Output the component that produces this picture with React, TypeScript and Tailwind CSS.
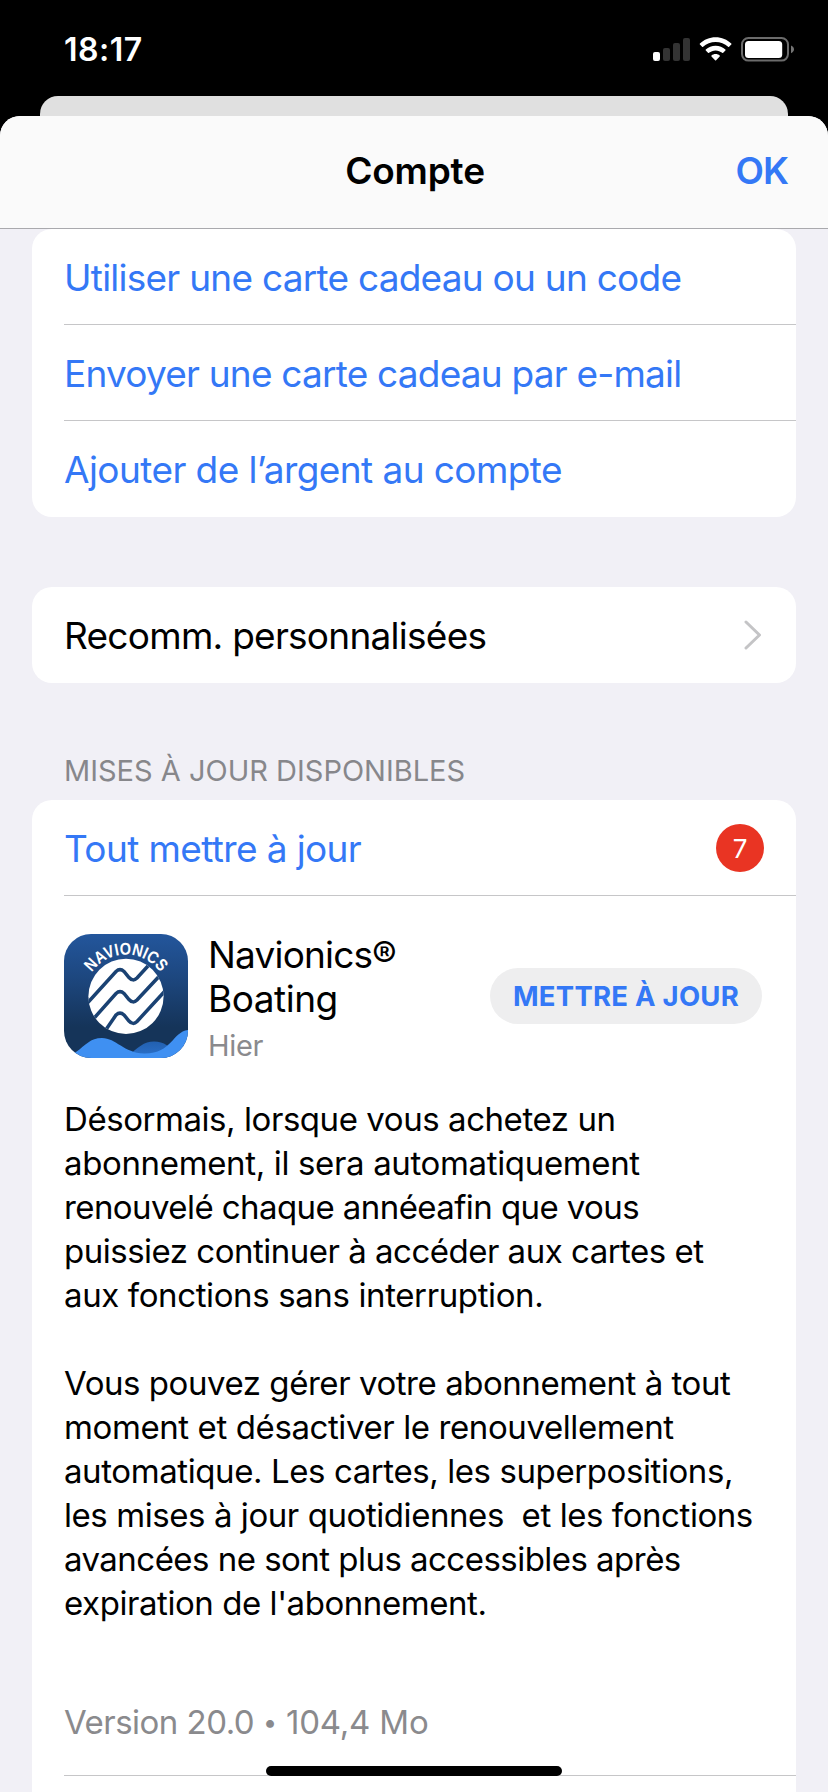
import React from "react";

const sf = "font-[Inter,'Noto_Sans',sans-serif]";

const description: { text: string; cls: string }[] = [
  { text: "Désormais, lorsque vous achetez un", cls: "tracking-[-0.44px]" },
  { text: "abonnement, il sera automatiquement", cls: "tracking-[-0.35px]" },
  { text: "renouvelé chaque annéeafin que vous", cls: "tracking-[-0.58px]" },
  { text: "puissiez continuer à accéder aux cartes et", cls: "tracking-[-0.50px]" },
  { text: "aux fonctions sans interruption.", cls: "tracking-[-0.38px]" },
  { text: "", cls: "" },
  { text: "Vous pouvez gérer votre abonnement à tout", cls: "tracking-[-0.45px]" },
  { text: "moment et désactiver le renouvellement", cls: "tracking-[-0.40px]" },
  { text: "automatique. Les cartes, les superpositions,", cls: "tracking-[-0.41px]" },
  { text: "les mises à jour quotidiennes  et les fonctions", cls: "tracking-[-0.43px]" },
  { text: "avancées ne sont plus accessibles après", cls: "tracking-[-0.53px]" },
  { text: "expiration de l'abonnement.", cls: "tracking-[-0.44px]" },
];

function StatusIcons() {
  return (
    <svg width="144" height="30" viewBox="0 0 144 30" fill="none">
      <rect x="1" y="16" width="7" height="9" rx="2" fill="#fff" />
      <rect x="11" y="12" width="7" height="13" rx="2" fill="#333" />
      <rect x="21" y="7" width="7" height="18" rx="2" fill="#333" />
      <rect x="31" y="2" width="7" height="23" rx="2" fill="#333" />
      <g transform="translate(47.6 1.2)" fill="#fff">
        <path d="M16 0C9.900 0 4.400 2.400 .3 6.300C0 6.600 0 7 .3 7.300L2.500 9.500C2.800 9.800 3.200 9.800 3.500 9.500C6.800 6.500 11.200 4.800 16 4.800C20.800 4.800 25.200 6.500 28.500 9.500C28.800 9.800 29.200 9.800 29.500 9.500L31.700 7.300C32 7 32 6.600 31.700 6.300C27.600 2.400 22.100 0 16 0Z" />
        <path d="M16 8.600C12.200 8.600 8.800 10 6.200 12.400C5.900 12.700 5.900 13.100 6.200 13.400L8.400 15.600C8.700 15.900 9.100 15.900 9.400 15.600C11.200 14.100 13.500 13.200 16 13.200C18.500 13.200 20.800 14.100 22.600 15.600C22.900 15.900 23.300 15.900 23.600 15.600L25.800 13.400C26.100 13.100 26.100 12.700 25.800 12.400C23.200 10 19.800 8.600 16 8.600Z" />
        <path d="M16 16.900C14.400 16.900 13 17.400 11.900 18.400C11.600 18.700 11.600 19 11.900 19.300L15.500 23C15.800 23.300 16.200 23.300 16.500 23L20.100 19.300C20.400 19 20.400 18.700 20.100 18.400C19 17.400 17.600 16.900 16 16.900Z" />
      </g>
      <rect x="90" y="2" width="46" height="22.6" rx="6.500" stroke="#6b6b6b" strokeWidth="2" />
      <rect x="93" y="5" width="37.200" height="17" rx="3.500" fill="#fff" />
      <path d="M139 9.500C140.800 10.200 142 11.700 142 13.300C142 15 140.800 16.500 139 17.200Z" fill="#747474" />
    </svg>
  );
}

function NavionicsIcon() {
  return (
    <svg width="124" height="124" viewBox="0 0 124 124" className="shrink-0">
      <defs>
        <linearGradient id="sea" x1="0" y1="0" x2="0" y2="1">
          <stop offset="0" stopColor="#23569c" />
          <stop offset="0.35" stopColor="#1d477f" />
          <stop offset="0.75" stopColor="#153459" />
          <stop offset="1" stopColor="#153459" />
        </linearGradient>
        <linearGradient id="backWave" x1="0" y1="0" x2="0" y2="1">
          <stop offset="0" stopColor="#2260b0" />
          <stop offset="1" stopColor="#2c72cc" />
        </linearGradient>
        <clipPath id="tile">
          <rect width="124" height="124" rx="27" />
        </clipPath>
        <clipPath id="disc">
          <circle cx="62" cy="62.300" r="37.600" />
        </clipPath>
        <path id="arc" d="M20.300 62.300A41.700 41.700 0 0 1 103.700 62.300" />
      </defs>
      <g clipPath="url(#tile)">
        <rect width="124" height="124" fill="url(#sea)" />
        <path d="M62 124C74 113 80 107.500 90 107.500C100 107.500 106 112 114 124Z" fill="url(#backWave)" />
        <path d="M0 124L12 118C22 111 26 104 38 104C52 104 60 119 80 119.500C108 120 108 98 124 96V124Z" fill="#3f90f2" />
        <circle cx="62" cy="62.300" r="37.600" fill="#fff" />
        <g clipPath="url(#disc)" stroke="#1a4273" strokeWidth="3.500" fill="none">
          <path d="M22 70.500L52 37.500Q56 33.700 60 37.500L65 43.500Q69 48 73 44L89 26.500" />
          <path d="M28 86.500L52 59.500Q56 55.700 60 59.500L65 65.500Q69 70 73 66L101 36" />
          <path d="M40 98.500L52 81Q56 77.200 60 81L65 87Q69 91.500 73 87.500L101 57" />
        </g>
      </g>
      <text fill="#fff" className="font-['Liberation_Sans',Arial,sans-serif] text-[17px] font-bold" textAnchor="middle" textLength="80" lengthAdjust="spacingAndGlyphs">
        <textPath href="#arc" startOffset="50%" textLength="80" lengthAdjust="spacingAndGlyphs">
          NAVIONICS
        </textPath>
      </text>
    </svg>
  );
}

function LinkRow({ text, cls, last = false }: { text: string; cls: string; last?: boolean }) {
  return (
    <div className={"ml-8 flex h-24 items-center pt-[2px] whitespace-nowrap text-[37px] text-[#3478f6] " + (last ? "" : "border-b border-[#c6c6c8]")}>
      <span className={cls}>{text}</span>
    </div>
  );
}

export default function App() {
  return (
    <div className={"relative flex h-[1792px] w-[828px] flex-col overflow-hidden bg-black " + sf}>
      <div className="flex h-24 shrink-0 items-start justify-between pt-[30px] pl-16">
        <span className="text-[32px] leading-10 font-semibold tracking-[0.48px] text-white">18:17</span>
        <div className="mt-[6px] mr-[32px]">
          <StatusIcons />
        </div>
      </div>
      <div className="mx-10 h-5 shrink-0 rounded-t-[18px] bg-[#e0e0e0]" />
      <div className="flex min-h-0 grow flex-col overflow-hidden rounded-t-[20px] bg-[#f1f0f6]">
        <header className="grid h-[113px] shrink-0 grid-cols-3 items-center border-b border-[#a9a9ad] bg-[#fafafa] pb-[3px] text-[37px] font-semibold">
          <span />
          <h1 className="pl-[2px] text-center tracking-[-0.18px]">Compte</h1>
          <span className="pr-[40px] text-right font-[560] tracking-[-1px] text-[#3478f6]">OK</span>
        </header>

        <main className="flex flex-col px-8">
          <section className="rounded-[20px] bg-white">
            <LinkRow text="Utiliser une carte cadeau ou un code" cls="tracking-[-0.75px]" />
            <LinkRow text="Envoyer une carte cadeau par e-mail" cls="tracking-[-0.79px]" />
            <LinkRow text="Ajouter de l’argent au compte" cls="tracking-[-0.58px]" last />
          </section>

          <section className="mt-[70px] flex h-24 items-center justify-between rounded-[20px] bg-white pr-[34px] pl-8 text-[37px]">
            <span className="pt-[2px] tracking-[-0.74px]">Recomm. personnalisées</span>
            <svg width="18" height="30" viewBox="0 0 18 30" fill="none" stroke="#c4c4c6" strokeWidth="3" strokeLinecap="round" strokeLinejoin="round">
              <path d="M2 2L15.500 15L2 28" />
            </svg>
          </section>

          <h2 className="mt-[68px] mb-[9px] pl-8 text-[29px] leading-10 text-[#87878b]">MISES À JOUR DISPONIBLES</h2>

          <section className="flex h-[1000px] flex-col rounded-t-[20px] bg-white pl-8">
            <div className="flex h-24 shrink-0 items-center justify-between border-b border-[#c6c6c8] pr-8 text-[37px] text-[#3478f6]">
              <span className="pt-[2px] tracking-[-0.62px]">Tout mettre à jour</span>
              <span className="flex size-12 items-center justify-center rounded-full bg-[#e93423] pt-[2px] text-[26px] font-normal text-white">7</span>
            </div>

            <div className="mt-[37px] flex h-[126px] items-center pr-[34px]">
              <NavionicsIcon />
              <div className="ml-[20px] flex-1 pt-[5px]">
                <div className="text-[37px] leading-[44px]">
                  <div className="tracking-[-0.80px]">Navionics®</div>
                  <div className="tracking-[-0.48px]">Boating</div>
                </div>
                <div className="mt-[7px] text-[29px] leading-9 tracking-[-0.29px] text-[#8a8a8d]">Hier</div>
              </div>
              <button className="h-14 w-[272px] rounded-full bg-[#eeeeef] pt-px text-center text-[27.500px] font-bold tracking-[0.25px] whitespace-nowrap text-[#3478f6]">
                METTRE À JOUR
              </button>
            </div>

            <div className="mt-[38px] text-[33px] leading-[44px] whitespace-pre">
              {description.map((line, i) => (
                <div key={i} className={"h-[44px] " + line.cls}>
                  {line.text}
                </div>
              ))}
            </div>

            <div className="mt-[75px] flex h-[76px] shrink-0 items-start border-b border-[#c6c6c8] text-[33px] leading-[44px] tracking-[-0.52px] whitespace-pre text-[#8a8a8d]">
              <span>Version 20.0 </span>
              <span className="w-[14px] text-center text-[25px]">•</span>
              <span className="tracking-[-0.2px]"> 104,4 Mo</span>
            </div>
          </section>
        </main>
      </div>
      <div className="absolute bottom-4 left-[266px] h-[10px] w-[296px] rounded-full bg-black" />
    </div>
  );
}
